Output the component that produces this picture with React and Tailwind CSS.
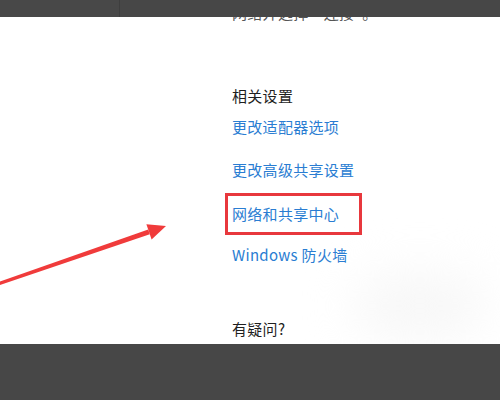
export default function App() {
  return (
    <div className="flex h-[400px] w-[500px] flex-col overflow-hidden bg-white font-['Noto_Sans_CJK_SC','Noto_Sans',sans-serif]">
      {/* top bar */}
      <div className="flex h-[17px] shrink-0 bg-[#474747]">
        <div className="w-[120px] border-r border-[#3e3e3e] bg-[#484848]" />
        <div className="flex-1" />
      </div>

      {/* content */}
      <div className="relative flex-1 overflow-hidden">
        <div className="pointer-events-none absolute left-[355px] top-[258px] h-[62px] w-[130px] rounded-full bg-[#f7f7f7] blur-xl" />

        <div className="relative flex flex-col pl-[232px] text-[15px] leading-[20px] tracking-[0.3px]">
          <div className="-mt-[14px] text-[#555]">网络并选择“连接”。</div>
          <div className="mt-[63px] text-[#1f1f1f]">相关设置</div>
          <div className="mt-[11px] text-[#2a7dd2]">更改适配器选项</div>
          <div className="mt-[23px] text-[#2a7dd2]">更改高级共享设置</div>
          <div className="-ml-[7px] mt-[13px] w-[137px] border-[3px] border-[#e8383d] py-2 pl-1 text-[#2a7dd2]">
            网络和共享中心
          </div>
          <div className="mt-[10px] text-[#2a7dd2]">Windows 防火墙</div>
          <div className="mt-[54px] text-[#1f1f1f]">有疑问?</div>
        </div>

        {/* annotation arrow */}
        <svg
          className="pointer-events-none absolute left-0 top-[-17px]"
          width="200"
          height="320"
          viewBox="0 0 200 320"
        >
          <polygon
            points="-10,285 148.2,229.6 149.8,234.3 -10,288.5"
            fill="#f03b3b"
          />
          <polygon
            points="166,226 146.4,224.3 151.6,239.5"
            fill="#f03b3b"
          />
        </svg>
      </div>

      {/* bottom bar */}
      <div className="h-[56px] shrink-0 bg-[#474747]" />
    </div>
  );
}
